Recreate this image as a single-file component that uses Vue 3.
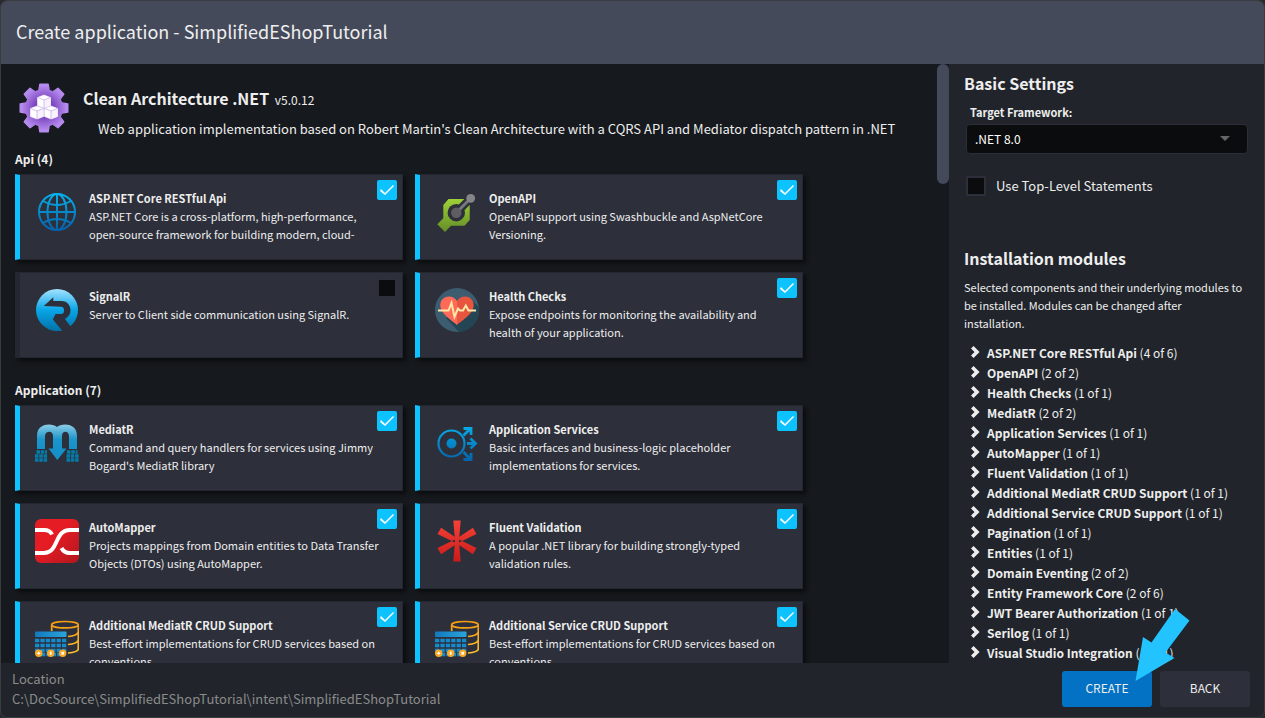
<script setup>
import { ref } from 'vue'

const groups = ref([
  {
    name: 'Api',
    count: 4,
    items: [
      { id: 'rest', icon: 'globe', title: 'ASP.NET Core RESTful Api', text: 'ASP.NET Core is a cross-platform, high-performance, open-source framework for building modern, cloud-', on: true },
      { id: 'openapi', icon: 'openapi', title: 'OpenAPI', text: 'OpenAPI support using Swashbuckle and AspNetCore Versioning.', on: true },
      { id: 'signalr', icon: 'signalr', title: 'SignalR', text: 'Server to Client side communication using SignalR.', on: false },
      { id: 'health', icon: 'health', title: 'Health Checks', text: 'Expose endpoints for monitoring the availability and health of your application.', on: true },
    ],
  },
  {
    name: 'Application',
    count: 7,
    items: [
      { id: 'mediatr', icon: 'mediatr', title: 'MediatR', text: "Command and query handlers for services using Jimmy Bogard's MediatR library", on: true },
      { id: 'services', icon: 'services', title: 'Application Services', text: 'Basic interfaces and business-logic placeholder implementations for services.', on: true },
      { id: 'automapper', icon: 'automapper', title: 'AutoMapper', text: 'Projects mappings from Domain entities to Data Transfer Objects (DTOs) using AutoMapper.', on: true },
      { id: 'fluent', icon: 'fluent', title: 'Fluent Validation', text: 'A popular .NET library for building strongly-typed validation rules.', on: true },
      { id: 'crud-mediatr', icon: 'crud', title: 'Additional MediatR CRUD Support', text: 'Best-effort implementations for CRUD services based on conventions.', on: true },
      { id: 'crud-service', icon: 'crud', title: 'Additional Service CRUD Support', text: 'Best-effort implementations for CRUD services based on conventions.', on: true },
    ],
  },
])

const modules = [
  ['ASP.NET Core RESTful Api', 4, 6],
  ['OpenAPI', 2, 2],
  ['Health Checks', 1, 1],
  ['MediatR', 2, 2],
  ['Application Services', 1, 1],
  ['AutoMapper', 1, 1],
  ['Fluent Validation', 1, 1],
  ['Additional MediatR CRUD Support', 1, 1],
  ['Additional Service CRUD Support', 1, 1],
  ['Pagination', 1, 1],
  ['Entities', 1, 1],
  ['Domain Eventing', 2, 2],
  ['Entity Framework Core', 2, 6],
  ['JWT Bearer Authorization', 1, 1],
  ['Serilog', 1, 1],
  ['Visual Studio Integration', 1, 1],
]

const framework = ref('.NET 8.0')
const topLevel = ref(false)
const teeth = [0, 45, 90, 135, 180, 225, 270, 315]
const cubes = [[25, 12], [18, 23], [32, 23]]
</script>

<template>
  <div class="dialog">
    <svg class="defs" width="0" height="0" aria-hidden="true">
      <defs>
        <linearGradient id="blue" x1="0" y1="0" x2="0" y2="44" gradientUnits="userSpaceOnUse">
          <stop offset="0" stop-color="#06b9f2" /><stop offset="1" stop-color="#0559a4" />
        </linearGradient>
        <linearGradient id="sky" x1="0" y1="0" x2="0" y2="1">
          <stop offset="0" stop-color="#a4e2ff" /><stop offset=".5" stop-color="#08a6e8" /><stop offset="1" stop-color="#0270a8" />
        </linearGradient>
        <linearGradient id="green" x1="0" y1="0" x2="0" y2="1">
          <stop offset="0" stop-color="#9fd037" /><stop offset="1" stop-color="#638d27" />
        </linearGradient>
        <linearGradient id="red" x1="0" y1="0" x2="1" y2="1">
          <stop offset="0.4" stop-color="#e61c24" /><stop offset="1" stop-color="#b3161e" />
        </linearGradient>
        <linearGradient id="star" x1="0" y1="0" x2="0" y2="44" gradientUnits="userSpaceOnUse">
          <stop offset="0" stop-color="#f84339" /><stop offset="1" stop-color="#c91a18" />
        </linearGradient>
        <linearGradient id="gold" x1="0" y1="4" x2="0" y2="36" gradientUnits="userSpaceOnUse">
          <stop offset="0" stop-color="#f59a12" /><stop offset="1" stop-color="#fcc42c" />
        </linearGradient>
        <linearGradient id="sheet" x1="0" y1="0" x2="32" y2="0" gradientUnits="userSpaceOnUse">
          <stop offset="0" stop-color="#1279bf" /><stop offset="1" stop-color="#2ba5da" />
        </linearGradient>
        <linearGradient id="stream" x1="0" y1="4" x2="0" y2="28" gradientUnits="userSpaceOnUse">
          <stop offset="0" stop-color="#8acbe6" /><stop offset=".6" stop-color="#1b96cc" /><stop offset="1" stop-color="#1690c9" />
        </linearGradient>
        <radialGradient id="violet" cx="25" cy="25" r="25" gradientUnits="userSpaceOnUse">
          <stop offset="0.2" stop-color="#6a32b0" /><stop offset="0.9" stop-color="#b68bee" />
        </radialGradient>
      </defs>
    </svg>

    <header class="titlebar"><h1>Create application - SimplifiedEShopTutorial</h1></header>

    <div class="body">
      <main class="content">
        <div class="product">
          <svg class="logo" viewBox="0 0 50 50" aria-hidden="true">
            <g fill="url(#violet)">
              <circle cx="25" cy="25" r="19" />
              <path v-for="a in teeth" :key="a" d="M19 8 20.2 1Q20.4 .5 21 .5H29Q29.6 .5 29.8 1L31 8Z" :transform="`rotate(${a} 25 25)`" />
            </g>
            <g v-for="c in cubes" :key="c[0]" :transform="`translate(${c[0]} ${c[1]})`">
              <path d="M0 0 6.500 2.500V10.500L0 13-6.500 10.500V2.500Z" fill="#fff" stroke="#fff" stroke-width=".6" stroke-linejoin="round" />
              <path d="M0 5V13L6.500 10.500V2.500Z" fill="#f7f2fd" />
              <path d="M-6.500 2.500 0 5 6.500 2.500M0 5V13" fill="none" stroke="#b795e4" stroke-width=".6" />
            </g>
          </svg>
          <div>
            <h2>Clean Architecture .NET <span class="version">v5.0.12</span></h2>
            <p class="summary">Web application implementation based on Robert Martin's Clean Architecture with a CQRS API and Mediator dispatch pattern in .NET</p>
          </div>
        </div>

        <section v-for="group in groups" :key="group.name" class="group">
          <h3>{{ group.name }} ({{ group.count }})</h3>
          <div class="cards">
            <label v-for="item in group.items" :key="item.id" class="card" :class="{ on: item.on }">
              <svg class="icon" viewBox="0 0 44 44" aria-hidden="true">
                <g v-if="item.icon === 'globe'" fill="none" stroke="url(#blue)" stroke-width="2">
                  <circle cx="22" cy="22" r="18" />
                  <ellipse cx="22" cy="22" rx="9.5" ry="18" />
                  <path d="M22.01 4 22 40M4 22H40.01M8 11Q22 19 36 11M8 33Q22 25 36 33" />
                </g>
                <g v-else-if="item.icon === 'openapi'">
                  <path d="M13.5 9H30L34.7 15V30L29.5 35.7H16L10 42 2.3 34.3 8.3 28.3V15Z" fill="url(#green)" />
                  <circle cx="21.3" cy="22.7" r="8.7" fill="#2d303b" />
                  <path d="M21.3 22.7 36 8" stroke="#2d303b" stroke-width="8" />
                  <path d="M21.3 22.7 36 8" stroke="#77777d" stroke-width="3" />
                  <circle cx="35.7" cy="8.3" r="4.4" fill="#858589" />
                  <circle cx="21.3" cy="22.7" r="5.2" fill="#5d5d62" />
                </g>
                <g v-else-if="item.icon === 'signalr'">
                  <circle cx="22" cy="22" r="21" fill="url(#sky)" />
                  <path d="M8.800 18 18.300 9.300V13H26.500C32.500 13 35.500 18 35.500 22.300 35.500 26 33.500 29 30 31L35.500 38.500 28.500 44 17.800 31.500 20.500 26H26Q29 26 29 22.500 29 18.800 26 18.800Z" fill="#2d303b" />
                </g>
                <g v-else-if="item.icon === 'health'">
                  <circle cx="22" cy="22" r="22" fill="#3c5c70" />
                  <path d="M36 11 43.8 19.500A22 22 0 0 1 24 43.900L11 30Z" fill="#234554" />
                  <path d="M22 37C18 33 5 26 5.300 17 5.500 8 17 5.500 22 13Z" fill="#ff6a58" />
                  <path d="M22 37C26 33 39 26 38.700 17 38.500 8 27 5.500 22 13Z" fill="#e7553f" />
                  <path d="M3 22.500H13.500L16.500 15 19.500 29 23 20.500 25 22.500H28L30.800 17.500 33.500 22.500H41" fill="none" stroke="#ffe8a8" stroke-width="2" />
                </g>
                <g v-else-if="item.icon === 'mediatr'">
                  <path d="M2 28V15C2 1 18 2 22 6 26 2 42 1 42 15V28H34V15C34 10 27 9 27 15V27.500H31.500L22.300 39 13.500 27.500H18V15C18 9 10 10 10 15V28Z" fill="url(#stream)" />
                  <path d="M1.500 31H12M0 35H12.500M0 39H12.500M32 31H42.500M31.500 35H44M31.500 39H44" stroke="#067ba8" stroke-width="3.400" stroke-dasharray="3.500 .8" />
                </g>
                <g v-else-if="item.icon === 'services'" fill="none" stroke="url(#blue)">
                  <circle cx="16.500" cy="22.500" r="13" stroke-width="2.200" />
                  <circle cx="16.500" cy="22.500" r="5" fill="url(#blue)" stroke="none" />
                  <path d="M28.500 14.500 35 8M28.500 7.500H36V14M28.500 31 35 38M28.500 38.500H36V32M32 22.500H40V22.600M35.500 17.500 40.500 22.500 35.500 27.500" stroke-width="2.800" />
                </g>
                <g v-else-if="item.icon === 'automapper'">
                  <rect width="44" height="44" rx="6" fill="url(#red)" />
                  <path d="M0 11H9Q15 11 17 15.500M0 34H9C24 34 19 11 35 11H44M26.500 29Q29 34 35 34H44" fill="none" stroke="#fff" stroke-width="4" />
                </g>
                <g v-else-if="item.icon === 'fluent'" fill="url(#star)">
                  <path d="M18.300 1.500H25.700L24 22H20ZM18.300 42.500H25.700L24 22H20Z" />
                  <path d="M37.900 8.700 41.500 15 23 24 21 20ZM6.100 35.300 2.500 29 21 20 23 24ZM6.100 8.700 2.500 15 21 24 23 20ZM37.900 35.300 41.500 29 23 20 21 24Z" />
                </g>
                <g v-else>
                  <g fill="none" stroke="url(#gold)" stroke-width="1.700">
                    <ellipse cx="30" cy="7.700" rx="13.300" ry="3.200" />
                    <path d="M16.700 8V14M43.300 8V32Q43 35 33 36M43.300 15Q42 19 33 19.500M43.300 23Q42 27 33 27.500" />
                  </g>
                  <rect y="14.500" width="31.500" height="5.500" rx="1" fill="url(#sheet)" />
                  <path d="M0 23.500H31.500M0 28.500H31.500M0 33.500H31.500M6 37.500H25.500" fill="none" stroke="#178ace" stroke-width="3.600" stroke-dasharray="4.300 1.100" />
                  <g fill="#fba923">
                    <circle cx="3.700" cy="36.300" r="3.700" /><circle cx="15.700" cy="36.300" r="3.700" /><circle cx="27.700" cy="36.300" r="3.700" />
                  </g>
                  <path d="M2.200 36.300H5.200M3.700 34.800V37.800M15.700 34.500V38M14.500 36H17M26.500 35 29 37.500M29 35 26.500 37.500" stroke="#fff" stroke-width="1.200" />
                </g>
              </svg>
              <span class="copy">
                <strong>{{ item.title }}</strong>
                <span class="desc">{{ item.text }}</span>
              </span>
              <input v-model="item.on" type="checkbox" class="tick corner">
            </label>
          </div>
        </section>
      </main>

      <div class="scrollbar"><div class="thumb"></div></div>

      <aside class="side">
        <h2>Basic Settings</h2>
        <label class="field-label" for="framework">Target Framework:</label>
        <div class="select">
          <select id="framework" v-model="framework"><option>.NET 8.0</option></select>
          <svg viewBox="0 0 10 5" aria-hidden="true"><path d="M0 0H10L5 5Z" fill="#666" /></svg>
        </div>
        <label class="option"><input v-model="topLevel" type="checkbox" class="tick">Use Top-Level Statements</label>

        <h2>Installation modules</h2>
        <p class="hint">Selected components and their underlying modules to be installed. Modules can be changed after<br>installation.</p>
        <ul>
          <li v-for="m in modules" :key="m[0]">
            <button type="button" class="module">
              <svg viewBox="0 0 10 12" aria-hidden="true"><path d="M1.300 1.300 6 6 1.300 10.700" fill="none" stroke="#eee" stroke-width="3.600" /></svg>
              <span><b>{{ m[0] }}</b> ({{ m[1] }} of {{ m[2] }})</span>
            </button>
          </li>
        </ul>
      </aside>
    </div>

    <footer class="footer">
      <div class="location"><div>Location</div><div>C:\DocSource\SimplifiedEShopTutorial\intent\SimplifiedEShopTutorial</div></div>
      <button type="button" class="btn primary">CREATE</button>
      <button type="button" class="btn">BACK</button>
    </footer>

    <svg class="pointer" viewBox="0 0 55 74" aria-hidden="true">
      <path d="M.500 73 8 29 16.500 34.500 40 1 54.500 12.500 30.500 44.500 39.500 50Z" fill="#22c3ff" />
    </svg>
  </div>
</template>

<style>
body {
  background: #2a2a2c;
}
</style>

<style scoped>
* {
  box-sizing: border-box;
}
h1, h2, h3, p, ul {
  margin: 0;
  padding: 0;
  list-style: none;
}
.dialog {
  position: relative;
  display: flex;
  flex-direction: column;
  height: 100vh;
  overflow: hidden;
  border: 1px solid #3b3c3f;
  border-radius: 7px;
  background: #21252b;
  color: #eee;
  font: 13px/18px "Noto Sans CJK SC", "Noto Sans", sans-serif;
}
.defs {
  position: absolute;
}
.titlebar {
  flex: none;
  padding: 15px 15px 18px;
  background: #444a5a;
}
.titlebar h1 {
  font-size: 18px;
  line-height: 30px;
  font-weight: 400;
}
.body {
  flex: 1;
  display: flex;
  min-height: 0;
}
.content {
  flex: 1;
  min-width: 0;
  padding: 15px 0 0 14px;
  overflow: hidden;
  background: #16191d;
}
.product {
  display: flex;
  gap: 14px;
  padding: 4px 0 0 4px;
}
.logo {
  flex: none;
  width: 50px;
  height: 50px;
}
.product h2 {
  padding-top: 3px;
  line-height: 24px;
}
.version {
  margin-left: 2px;
  font-size: 12px;
  font-weight: 400;
}
.summary {
  padding: 8px 0 0 15px;
}
.group {
  margin-bottom: 23px;
}
.group h3 {
  padding-bottom: 6px;
  font-size: 12px;
  font-weight: 700;
}
.product + .group {
  padding-top: 12px;
}
.cards {
  display: grid;
  grid-template-columns: repeat(auto-fill, 388px);
  gap: 12px;
}
.card {
  position: relative;
  display: flex;
  gap: 10px;
  height: 86px;
  padding: 14px 18px 14px 15px;
  border: 1px solid #232730;
  border-left: 5px solid #232730;
  background: #2d303b;
  box-shadow: 3px 3px 4px #0b0d10;
  font-size: 11px;
}
.card.on {
  border-left-color: #0cc3ff;
}
.icon {
  flex: none;
  width: 44px;
  height: 44px;
  margin-top: 1px;
}
.copy {
  flex: 1;
  min-width: 0;
}
.copy strong, .desc {
  display: block;
}
.desc {
  max-height: 36px;
  overflow: hidden;
}
.tick {
  flex: none;
  appearance: none;
  width: 20px;
  height: 20px;
  margin: 0;
  border: 2px solid #2d303b;
  border-radius: 2px;
  background: #0b0c0e;
}
.tick:checked {
  border-color: #0cc3ff;
  background: #0cc3ff;
}
.tick:checked::after {
  content: "";
  display: block;
  width: 16px;
  height: 16px;
  background: #fff;
  clip-path: polygon(1px 9px, 2px 7px, 6px 11px, 14px 3px, 15px 4px, 6px 13px);
}
.corner {
  position: absolute;
  top: 5px;
  right: 5px;
}
.scrollbar {
  flex: none;
  width: 12px;
  background: #16191d;
}
.thumb {
  height: 120px;
  border-radius: 6px;
  background: #444a5a;
}
.side {
  flex: none;
  width: 315px;
  padding: 7px 15px 0;
  overflow: hidden;
}
h2 {
  font-size: 16px;
  line-height: 24px;
  font-weight: 700;
}
.field-label {
  display: block;
  padding: 8px 6px 3px;
  font-size: 11px;
  font-weight: 700;
}
.select {
  position: relative;
  width: 282px;
  margin-left: 2px;
}
.select select {
  appearance: none;
  display: block;
  width: 100%;
  height: 30px;
  padding: 0 8px;
  border: 1px solid #2b2f38;
  border-radius: 4px;
  background: #0b0c0e;
  color: #fff;
  font: inherit;
  font-size: 12px;
}
.select svg {
  position: absolute;
  top: 12px;
  right: 18px;
  width: 10px;
  height: 5px;
}
.option {
  display: flex;
  align-items: center;
  gap: 10px;
  margin: 22px 0 50px 2px;
}
.hint {
  padding: 8px 0 11px;
  font-size: 11px;
}
.module {
  display: flex;
  gap: 6px;
  width: 100%;
  padding: 0 0 0 7px;
  border: 0;
  background: none;
  color: inherit;
  font: inherit;
  font-size: 12px;
  line-height: 20px;
  text-align: left;
  white-space: nowrap;
}
.module svg {
  width: 10px;
  height: 12px;
  margin-top: 3px;
}
.footer {
  flex: none;
  display: flex;
  align-items: flex-start;
  gap: 8px;
  height: 54px;
  padding: 6px 14px 0 11px;
}
.location {
  flex: 1;
  color: #8b8b8b;
  line-height: 20px;
}
.btn {
  width: 90px;
  height: 36px;
  margin-top: 2px;
  padding: 0 0 2px;
  border: 0;
  border-radius: 3px;
  background: #2d303b;
  color: #eee;
  font: inherit;
  font-size: 12px;
}
.btn.primary {
  background: #0372c4;
}
.pointer {
  position: absolute;
  right: 74px;
  bottom: 35px;
  width: 55px;
  height: 74px;
  pointer-events: none;
}
</style>
